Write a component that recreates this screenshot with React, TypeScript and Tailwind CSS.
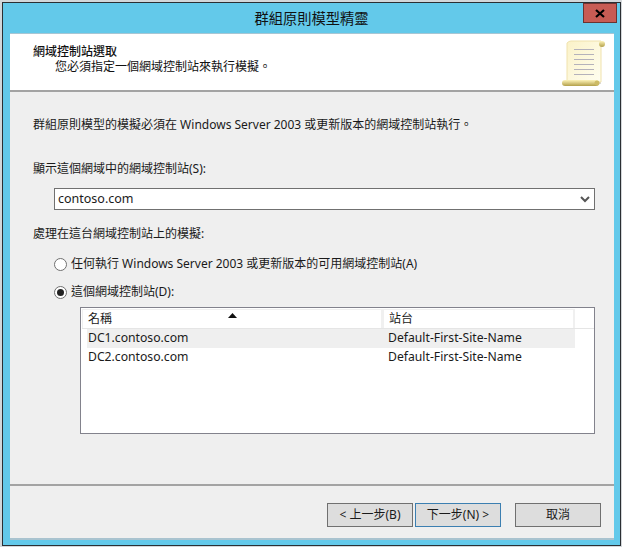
const font = { fontFamily: '"Noto Sans", "Noto Sans CJK TC", sans-serif' };

function Scroll() {
  return (
    <svg width="46" height="48" viewBox="0 0 46 48">
      <defs>
        <linearGradient id="paper" x1="0" y1="0" x2="1" y2="1">
          <stop offset="0" stopColor="#fbf2c8" />
          <stop offset="1" stopColor="#fffef0" />
        </linearGradient>
        <linearGradient id="roll" x1="0" y1="0" x2="0" y2="1">
          <stop offset="0" stopColor="#fdf3b8" />
          <stop offset="1" stopColor="#b3a04a" />
        </linearGradient>
      </defs>
      <path d="M8 4 H40 V44 H8 Z" fill="#b9b6a8" opacity="0.5" />
      <path d="M6 3 Q8 1 10 1 H40 V42 H6 Z" fill="url(#paper)" stroke="#f0e2ad" />
      <circle cx="41" cy="4" r="3" fill="url(#roll)" />
      <rect x="1" y="40" width="37" height="6" rx="3" fill="url(#roll)" />
      <circle cx="36" cy="43" r="2.5" fill="#cdbb66" />
      <g stroke="#b5b2bb">
        <path d="M13 9.5 H33" />
        <path d="M13 14.5 H33" />
        <path d="M13 19.5 H33" />
        <path d="M13 24.5 H33" />
        <path d="M13 29.5 H33" />
        <path d="M13 34.5 H33" />
      </g>
    </svg>
  );
}

function Radio({ checked, label }: { checked?: boolean; label: string }) {
  return (
    <div className="flex items-center h-4 gap-[4px] text-[12px] text-[#1a1a1a]">
      <span className="w-[13px] h-[13px] rounded-full border border-[#707070] bg-white flex items-center justify-center shrink-0">
        {checked && <span className="w-[7px] h-[7px] rounded-full bg-[#222]" />}
      </span>
      <span>{label}</span>
    </div>
  );
}

function Btn({ children, focus }: { children: string; focus?: boolean }) {
  return (
    <button
      className={`w-[86px] h-[24px] border bg-[#dddddd] text-[12px] text-[#1a1a1a] flex items-center justify-center ${focus ? "border-[#3c7fb1]" : "border-[#707070]"}`}
    >
      {children}
    </button>
  );
}

export default function App() {
  return (
    <div className="w-[622px] h-[547px] bg-[#d3d7da] pl-[2px] pt-[2px] pr-px pb-px overflow-hidden" style={font}>
      <div className="w-[619px] h-[544px] border border-[#2b2f33] bg-[#63c9ea] flex flex-col">
        <div className="h-[30px] shrink-0 relative flex items-center justify-center text-[14.25px] text-[#111] pt-px">
          群組原則模型精靈
          <div className="absolute right-[3px] top-0 w-[34px] h-[20px] bg-[#c75c54] border border-[#6b3330] flex items-center justify-center">
            <svg width="10" height="9" viewBox="0 0 10 9">
              <path d="M1 1 L9 8 M9 1 L1 8" stroke="#000" strokeWidth="2.2" />
            </svg>
          </div>
        </div>
        <div className="mx-[7px] w-[604px] h-[507px] bg-[#efefef] flex flex-col border-t border-[#a7c6d4] border-b-2 border-b-[#a9c3cf]">
          <div className="h-[58px] shrink-0 bg-white border-b-2 border-[#a3a3a3] relative pl-[23px] pt-[10px] text-[12px] leading-[16px] text-[#111]">
            <div className="font-medium">網域控制站選取</div>
            <div className="pl-[22px] -mt-px">您必須指定一個網域控制站來執行模擬。</div>
            <div className="absolute right-[7px] top-[6px]">
              <Scroll />
            </div>
          </div>
          <div className="flex-1 flex flex-col pl-[23px] pr-[19px] text-[12px] text-[#1a1a1a]">
            <div className="mt-[25px] h-4 leading-4">群組原則模型的模擬必須在 Windows Server 2003 或更新版本的網域控制站執行。</div>
            <div className="mt-7 h-4 leading-4">顯示這個網域中的網域控制站(S):</div>
            <div className="mt-[11px] ml-[21px] h-[22px] border border-[#707070] bg-white flex items-center justify-between pl-[3px] pr-[4px] text-[12.5px]">
              <span>contoso.com</span>
              <svg width="10" height="7" viewBox="0 0 10 7">
                <path d="M1 1 L5 5 L9 1" fill="none" stroke="#555" strokeWidth="2" />
              </svg>
            </div>
            <div className="mt-[16px] h-4 leading-4">處理在這台網域控制站上的模擬:</div>
            <div className="mt-[14px] ml-[21px] flex flex-col gap-3">
              <Radio label="任何執行 Windows Server 2003 或更新版本的可用網域控制站(A)" />
              <Radio checked label="這個網域控制站(D):" />
            </div>
            <div className="mt-[7px] ml-[47px] h-[127px] border border-[#82828c] bg-white pl-px pt-px">
              <div className="flex h-[20px] w-[512px] border-b border-[#e5e5e5] text-[12px]">
                <div className="w-[300px] relative border-x border-t border-[#f0f0f0] pl-[5px] leading-[18px]">
                  名稱
                  <svg className="absolute left-[145px] top-[3px]" width="9" height="5" viewBox="0 0 9 5">
                    <path d="M4.5 0 L9 5 H0 Z" fill="#111" />
                  </svg>
                </div>
                <div className="w-[193px] border-x-2 border-t border-[#f0f0f0] pl-[5px] leading-[18px]">站台</div>
              </div>
              <div className="w-[488px] flex h-[19px] ml-[5px] items-center bg-[#efefef] text-[12.2px]">
                <div className="w-[301px] pl-[1px]">DC1.contoso.com</div>
                <div>Default-First-Site-Name</div>
              </div>
              <div className="w-[488px] flex h-[19px] ml-[5px] items-center text-[12.2px]">
                <div className="w-[301px] pl-[1px]">DC2.contoso.com</div>
                <div>Default-First-Site-Name</div>
              </div>
            </div>
          </div>
          <div className="h-[54px] shrink-0 border-t-2 border-[#a3a3a3] flex items-start justify-end pt-[17px] pr-[13px]">
            <div className="flex gap-[2px]">
              <Btn>{"< 上一步(B)"}</Btn>
              <Btn focus>{"下一步(N) >"}</Btn>
            </div>
            <div className="ml-[14px]">
              <Btn>取消</Btn>
            </div>
          </div>
        </div>
      </div>
    </div>
  );
}
